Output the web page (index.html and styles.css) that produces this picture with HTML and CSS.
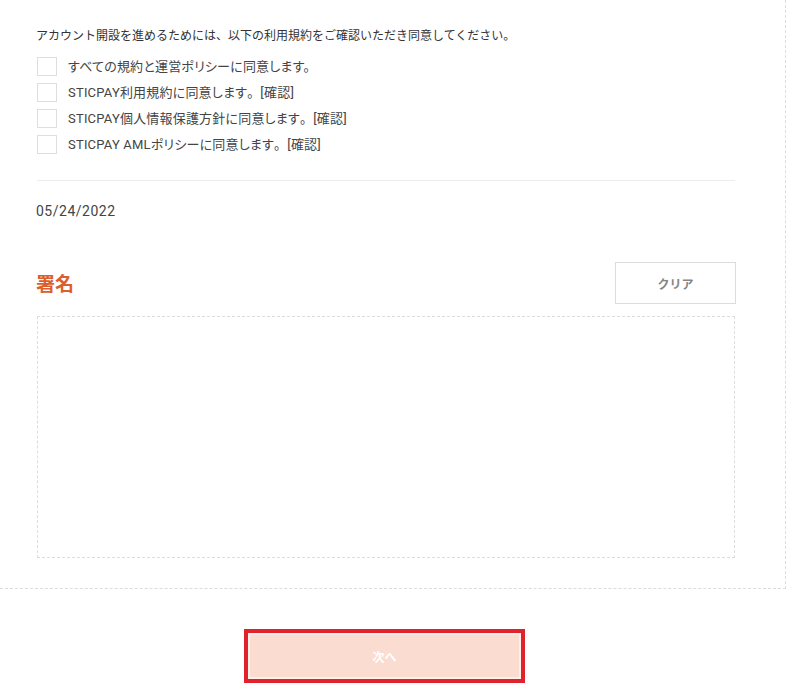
FILE: index.html
```html
<!DOCTYPE html>
<html lang="ja">
<head>
<meta charset="utf-8">
<title>署名</title>
<link rel="stylesheet" href="styles.css">
</head>
<body>
<div class="card">
  <p class="intro">アカウント開設を進めるためには、以下の利用規約をご確認いただき同意してください。</p>
  <ul class="agree-list">
    <li class="agree-row"><span class="box"></span><span class="label">すべての規約と運営ポリシーに同意します。</span></li>
    <li class="agree-row"><span class="box"></span><span class="label">STICPAY利用規約に同意します<span class="fw">。</span>[確認]</span></li>
    <li class="agree-row"><span class="box"></span><span class="label">STICPAY個人情報保護方針に同意します<span class="fw">。</span>[確認]</span></li>
    <li class="agree-row"><span class="box"></span><span class="label">STICPAY AMLポリシーに同意します<span class="fw">。</span>[確認]</span></li>
  </ul>
  <hr class="sep">
  <div class="date">05/24/2022</div>
  <div class="sig-head">
    <h2 class="sig-title">署名</h2>
    <button class="clear-btn" type="button">クリア</button>
  </div>
  <div class="sig-pad"></div>
</div>
<div class="footer">
  <button class="next-btn" type="button">次へ</button>
</div>
</body>
</html>
```
FILE: styles.css
```css
html, body {
  margin: 0;
  padding: 0;
  background: #fff;
}
body {
  font-family: Roboto, "Noto Sans CJK JP", sans-serif;
  color: #444;
  width: 786px;
}
.card {
  box-sizing: border-box;
  width: 786px;
  padding: 26px 50px 30px 36px;
  border-right: 1px dashed #dcdcdc;
  border-bottom: 1px dashed #dcdcdc;
}
.intro {
  margin: 0;
  font-family: "Noto Sans CJK JP", sans-serif;
  font-size: 12px;
  line-height: 18px;
  color: #333;
  letter-spacing: 0;
}
.agree-list {
  list-style: none;
  margin: 13px 0 0 0;
  padding: 0;
  display: flex;
  flex-direction: column;
  gap: 7px;
}
.agree-row {
  display: flex;
  align-items: center;
  height: 19px;
}
.box {
  box-sizing: border-box;
  width: 20px;
  height: 19px;
  border: 1px solid #dedede;
  background: #fff;
  flex: none;
  margin-left: 1px;
}
.label {
  margin-left: 11px;
  font-size: 13px;
  line-height: 19px;
  color: #444;
  font-feature-settings: "palt";
  letter-spacing: 0.2px;
}
.fw {
  font-feature-settings: normal;
}
.sep {
  margin: 26px 0 0 1px;
  border: 0;
  border-top: 1px solid #ececec;
  height: 0;
}
.date {
  margin-top: 20px;
  font-size: 14px;
  line-height: 20px;
  letter-spacing: 0.5px;
  color: #444;
}
.sig-head {
  margin-top: 41px;
  display: flex;
  justify-content: space-between;
  align-items: center;
}
.sig-title {
  margin: 0;
  font-family: "Noto Sans CJK JP", sans-serif;
  font-size: 19px;
  font-weight: 700;
  color: #dc5e2c;
  line-height: 26px;
}
.clear-btn {
  box-sizing: border-box;
  width: 121px;
  height: 42px;
  background: #fff;
  border: 1px solid #dcdcdc;
  font-family: "Noto Sans CJK JP", sans-serif;
  font-size: 12px;
  font-weight: 700;
  color: #858585;
  margin-right: -1px;
  padding: 0;
}
.sig-pad {
  box-sizing: border-box;
  margin-top: 12px;
  margin-left: 1px;
  height: 242px;
  border: 1px dashed #dddddd;
}
.footer {
  display: flex;
  justify-content: center;
  padding: 40px 17px 0 0;
}
.next-btn {
  box-sizing: border-box;
  width: 281px;
  height: 54px;
  border: 4px solid #e0222d;
  box-shadow: inset 0 0 0 2px #fdeee8;
  background: #fbdcd1;
  color: #fff;
  font-family: "Noto Sans CJK JP", sans-serif;
  font-size: 12px;
  font-weight: 700;
  padding: 0;
}
```
